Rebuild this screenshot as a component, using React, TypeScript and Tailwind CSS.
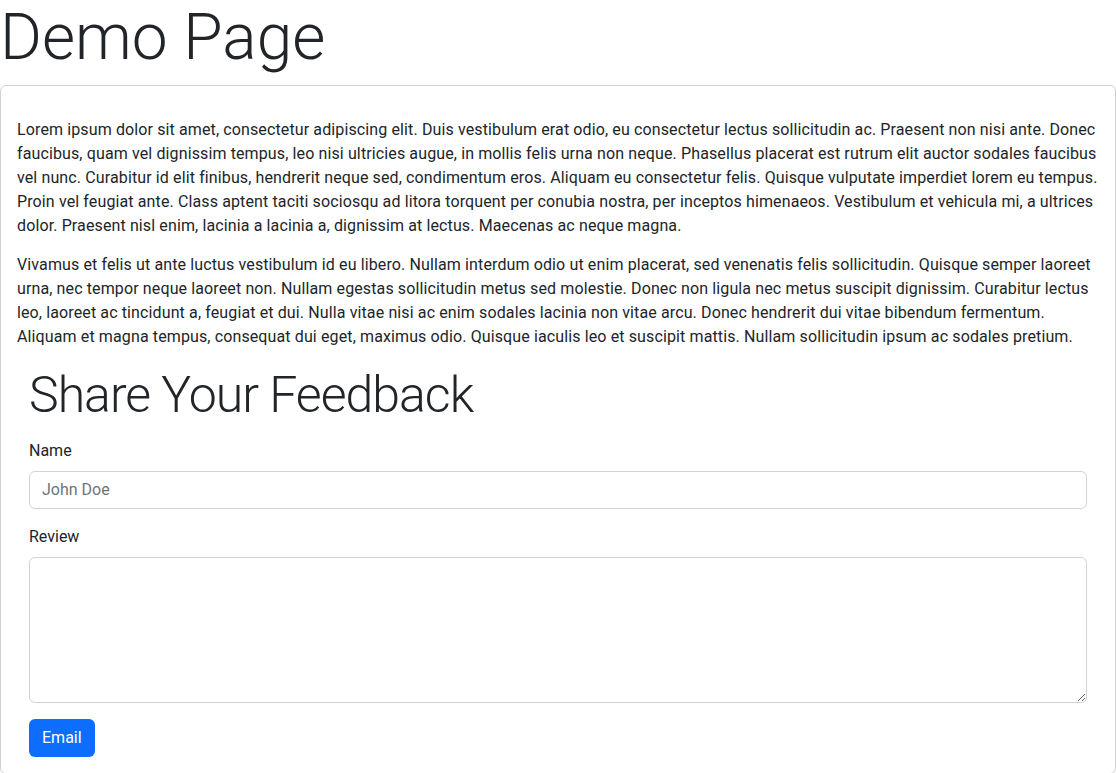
import React from 'react';

const font = { fontFamily: 'Roboto, "Noto Sans", sans-serif' };

export default function App() {
  return (
    <div className="bg-white text-[#212529] text-base leading-6" style={font}>
      <h1 className="text-[64px] font-light leading-[1.2] mb-2">Demo Page</h1>

      <div className="border border-[rgba(0,0,0,0.175)] rounded-md">
        <div className="px-4 pt-8 pb-4">
          <div className="tracking-[0.12px]">
            <p className="mb-[15px]">
              Lorem ipsum dolor sit amet, consectetur adipiscing elit. Duis vestibulum erat odio, eu consectetur lectus
              sollicitudin ac. Praesent non nisi ante. Donec faucibus, quam vel dignissim tempus, leo nisi ultricies
              augue, in mollis felis urna non neque. Phasellus placerat est rutrum elit auctor sodales faucibus vel nunc.
              Curabitur id elit finibus, hendrerit neque sed, condimentum eros. Aliquam eu consectetur felis. Quisque
              vulputate imperdiet lorem eu tempus. Proin vel feugiat ante. Class aptent taciti sociosqu ad litora torquent
              per conubia nostra, per inceptos himenaeos. Vestibulum et vehicula mi, a ultrices dolor. Praesent nisl enim,
              lacinia a lacinia a, dignissim at lectus. Maecenas ac neque magna.
            </p>
            <p className="mb-4">
              Vivamus et felis ut ante luctus vestibulum id eu libero. Nullam interdum odio ut enim placerat, sed venenatis
              felis sollicitudin. Quisque semper laoreet urna, nec tempor neque laoreet non. Nullam egestas sollicitudin
              metus sed molestie. Donec non ligula nec metus suscipit dignissim. Curabitur lectus leo, laoreet ac
              tincidunt a, feugiat et dui. Nulla vitae nisi ac enim sodales lacinia non vitae arcu. Donec hendrerit dui
              vitae bibendum fermentum. Aliquam et magna tempus, consequat dui eget, maximus odio. Quisque iaculis leo et
              suscipit mattis. Nullam sollicitudin ipsum ac sodales pretium.
            </p>
          </div>

          <div className="px-3">
            <h2 className="text-[50px] font-light leading-[1.2] tracking-[-1px] mb-[14px]">Share Your Feedback</h2>

            <form onSubmit={(e) => e.preventDefault()}>
              <div className="mb-4">
                <label htmlFor="name" className="block mb-2">Name</label>
                <input
                  id="name"
                  type="text"
                  placeholder="John Doe"
                  className="block w-full h-[38px] px-3 border border-[#ced4da] rounded-md placeholder:text-[#6c757d] outline-none"
                />
              </div>
              <div className="mb-4">
                <label htmlFor="review" className="block mb-2">Review</label>
                <textarea
                  id="review"
                  className="block w-full h-[146px] px-3 py-1.5 border border-[#ced4da] rounded-md outline-none resize-y"
                />
              </div>
              <button
                type="submit"
                className="h-[38px] px-[13px] bg-[#0d6efd] text-white rounded-md"
              >
                Email
              </button>
            </form>
          </div>
        </div>
      </div>
    </div>
  );
}
